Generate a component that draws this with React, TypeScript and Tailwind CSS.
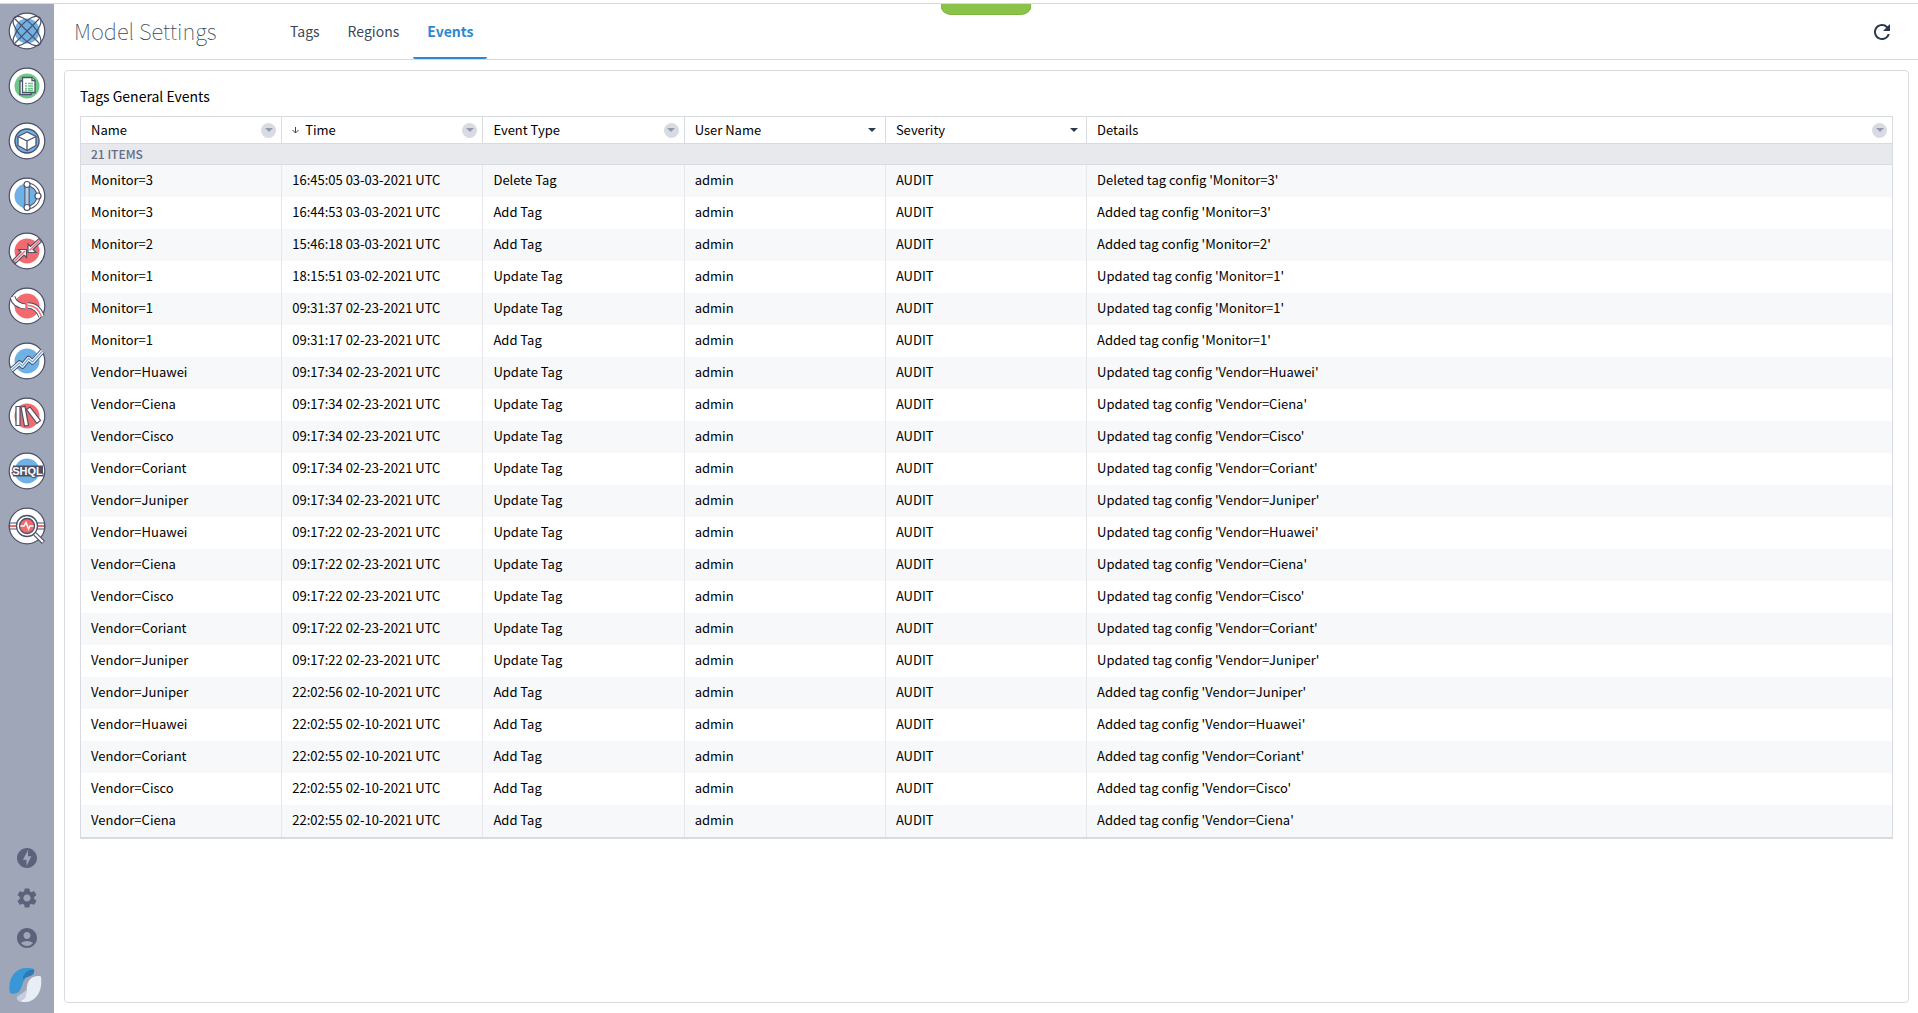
import React, { useState } from 'react'
import { MdAccountCircle, MdOfflineBolt, MdRefresh, MdSettings } from 'react-icons/md'

interface EventRow {
  name: string
  time: string
  type: string
  details: string
}

const row = (name: string, time: string, action: string): EventRow => ({
  name,
  time: `${time} UTC`,
  type: `${action} Tag`,
  details: `${action === 'Add' ? 'Added' : action + 'd'} tag config '${name}'`,
})

const events: EventRow[] = [
  row('Monitor=3', '16:45:05 03-03-2021', 'Delete'),
  row('Monitor=3', '16:44:53 03-03-2021', 'Add'),
  row('Monitor=2', '15:46:18 03-03-2021', 'Add'),
  row('Monitor=1', '18:15:51 03-02-2021', 'Update'),
  row('Monitor=1', '09:31:37 02-23-2021', 'Update'),
  row('Monitor=1', '09:31:17 02-23-2021', 'Add'),
  row('Vendor=Huawei', '09:17:34 02-23-2021', 'Update'),
  row('Vendor=Ciena', '09:17:34 02-23-2021', 'Update'),
  row('Vendor=Cisco', '09:17:34 02-23-2021', 'Update'),
  row('Vendor=Coriant', '09:17:34 02-23-2021', 'Update'),
  row('Vendor=Juniper', '09:17:34 02-23-2021', 'Update'),
  row('Vendor=Huawei', '09:17:22 02-23-2021', 'Update'),
  row('Vendor=Ciena', '09:17:22 02-23-2021', 'Update'),
  row('Vendor=Cisco', '09:17:22 02-23-2021', 'Update'),
  row('Vendor=Coriant', '09:17:22 02-23-2021', 'Update'),
  row('Vendor=Juniper', '09:17:22 02-23-2021', 'Update'),
  row('Vendor=Juniper', '22:02:56 02-10-2021', 'Add'),
  row('Vendor=Huawei', '22:02:55 02-10-2021', 'Add'),
  row('Vendor=Coriant', '22:02:55 02-10-2021', 'Add'),
  row('Vendor=Cisco', '22:02:55 02-10-2021', 'Add'),
  row('Vendor=Ciena', '22:02:55 02-10-2021', 'Add'),
]

const columns = [
  { label: 'Name', round: true },
  { label: 'Time', round: true, sorted: true },
  { label: 'Event Type', round: true },
  { label: 'User Name', round: false },
  { label: 'Severity', round: false },
  { label: 'Details', round: true },
]

const INK = '#4d5168'
const BLUE = '#6fb1e4'
const GREEN = '#6cc788'
const RED = '#f16a6d'

const apps = [
  {
    label: 'Explorer',
    color: BLUE,
    art: (
      <g fill="none" stroke={INK} strokeWidth="1.2">
        <ellipse cx="18" cy="18" rx="18.5" ry="8" transform="rotate(47 18 18)" />
        <ellipse cx="18" cy="18" rx="18.5" ry="8" transform="rotate(-47 18 18)" />
        <path d="M6 6 30 30M30 6 6 30" />
      </g>
    ),
  },
  {
    label: 'Inventory',
    color: GREEN,
    art: (
      <g fill="#fff" stroke={INK} strokeWidth="1.3">
        <path d="M11 13h11v13.500H11z" />
        <path d="M13.500 9.500h9.500l3 3V24.500H13.500z" />
        <path d="M23 9.500v3h3" />
        <path stroke={GREEN} d="M16 15.500h2M19 15.500h5M16 18h2M19 18h5M16 20.500h2M19 20.500h5M16 22.500h2M19 22.500h5" />
      </g>
    ),
  },
  {
    label: 'Model',
    color: BLUE,
    art: (
      <g fill="#fff" stroke={INK} strokeWidth="1.3" strokeLinejoin="round">
        <circle cx="18" cy="18" r="12" fill={BLUE} />
        <path d="M18 9l9 4.500v9L18 27.500l-9-5v-9z" />
        <path fill="none" d="M9 13.500l9 4.500 9-4.500M18 18v9.500" />
      </g>
    ),
  },
  {
    label: 'Topology',
    color: BLUE,
    art: (
      <g fill="#fff" stroke={INK} strokeWidth="1.2">
        <path fill="none" stroke={INK} strokeWidth="4" d="M18 6.500a11.500 11.500 0 0 1 0 23" />
        <path fill="none" stroke="#fff" strokeWidth="2" d="M18 6.500a11.500 11.500 0 0 1 0 23" />
        <path d="M16 8h4v20h-4z" />
        <path stroke={BLUE} d="M18 9v18" />
        <circle cx="18" cy="6.500" r="3" />
        <circle cx="18" cy="29.500" r="3" />
        <circle cx="29" cy="18" r="3" />
      </g>
    ),
  },
  {
    label: 'Conflicts',
    color: RED,
    art: (
      <g fill="#fff" stroke={INK} strokeWidth="1.2">
        <path d="M3.500 27.500l8.500-8.500-2.500-2.500h8v8l-2.500-2.500-8.500 8.500z" />
        <path d="M32.500 8.500L24 16.500l3 3h-8v-8.500l2.500 2.500 8.500-8z" />
        <path fill="none" stroke={RED} strokeWidth="1.500" d="M5 29l11-11M31 7l-10.500 10.500" />
      </g>
    ),
  },
  {
    label: 'Failures',
    color: RED,
    art: (
      <g fill="none">
        <path stroke={INK} strokeWidth="6" d="M3.500 9c1.500 6 6 9 13 9.500" />
        <path stroke="#fff" strokeWidth="4" d="M3.500 9c1.500 6 6 9 13.500 9.500" />
        <path stroke={INK} strokeWidth="6.500" d="M19 17.500c7 0 11 4 13.500 11" />
        <path stroke="#fff" strokeWidth="4.500" d="M18.500 17.500c7.500 0 11.500 4 14 11" />
        <path stroke={RED} strokeWidth="1.300" d="M19 17.500c7 0 11 4 13.500 11" />
        <path fill={RED} d="M16 14.500l3 2-1.500 1.500 2 1.500-3 2z" />
      </g>
    ),
  },
  {
    label: 'Traffic',
    color: BLUE,
    art: (
      <g fill="none" strokeLinejoin="round">
        <path stroke={INK} strokeWidth="5.500" d="M2.500 27l8-7 3 3 6-7.500 4 3.500 10-11" />
        <path stroke="#fff" strokeWidth="3.500" d="M2.500 27l8-7 3 3 6-7.500 4 3.500 10-11" />
        <path stroke={BLUE} strokeWidth="1.400" d="M2.500 27l8-7 3 3 6-7.500 4 3.500 10-11" />
      </g>
    ),
  },
  {
    label: 'Library',
    color: RED,
    art: (
      <g fill="#fff" stroke={INK} strokeWidth="1.200">
        <path d="M7 8.500h4v19H7z" />
        <path d="M12 9l4-.7 3.500 19-4 .7z" />
        <path d="M17.500 11.500l3.500-2.500 10.500 13.500-3.500 3z" />
      </g>
    ),
  },
  {
    label: 'Query',
    color: BLUE,
    art: (
      <g>
        <path fill={INK} d="M4 12.500h30v11H4z" />
        <text
          x="18.500"
          y="22"
          textAnchor="middle"
          fontFamily="Liberation Sans, sans-serif"
          fontSize="11"
          fontWeight="700"
          fill="#fff"
          stroke={INK}
          strokeWidth="2"
          paintOrder="stroke"
        >
          SHQL
        </text>
      </g>
    ),
  },
  {
    label: 'Diagnostics',
    color: '#fff',
    art: (
      <g fill="none" stroke={INK}>
        <path fill="#fff" strokeWidth="1.200" d="M.5 15h35v6H.5z" />
        <path stroke={RED} strokeWidth="2" d="M1 18h34" />
        <circle cx="18" cy="18" r="10.500" fill="#fff" strokeWidth="1.300" />
        <circle cx="18" cy="18" r="7.500" fill={RED} strokeWidth="1.300" />
        <path stroke="#fff" strokeWidth="1.500" d="M11.500 18h3.500l2-3.500 2.500 6.500 1.500-3h3.500" />
        <path strokeWidth="4.500" d="M26 26l8.500 8.500" />
        <path stroke="#fff" strokeWidth="2.200" d="M26 26l8 8" />
      </g>
    ),
  },
]

const AppIcon = ({ color, art }: { color: string; art: React.ReactNode }) => (
  <svg viewBox="0 0 36 36" className="size-9 overflow-visible">
    <circle cx="18" cy="18" r="17.800" fill="#fff" stroke={INK} strokeWidth="1.200" />
    <circle cx="18" cy="18" r="12.500" fill={color} />
    {art}
  </svg>
)

const Logo = () => (
  <svg viewBox="0 0 34 34" className="size-[34px]">
    <path fill="#3a97d6" d="M1 25C-2 11 6 0 17 0c5 0 8 .5 8 2 0 5-6 5-9 9-4 5-3 14-10 14.500-2 .3-4 .3-5-.5z" />
    <path fill="#2a7ab5" d="M14 9c2-5 6-8 11-7.500 1 4-2 6-5 7-3 .5-4 1-6 3z" />
    <path fill="#c5cde0" d="M8 31c-1-4 5-4 9-9l4 11c-5 2-11 2-13-2z" />
    <path fill="#e9edf5" d="M32 9c2 14-5 25-16 25-2 0-4-.5-4-1 7-3 5-8 6-15 1-6 5-10 11-10 2 0 3 0 3 1z" />
  </svg>
)

const Caret = ({ className }: { className: string }) => (
  <svg viewBox="0 0 8 4" className={className}>
    <path fill="currentColor" d="M0 0h8L4 4z" />
  </svg>
)

const Sidebar = () => (
  <nav className="flex w-[54px] shrink-0 flex-col items-center justify-between bg-[#9fa6b8] pt-[9px] pr-px pb-[11px]">
    <div className="flex flex-col gap-[19px]">
      {apps.map((app) => (
        <button key={app.label} type="button" aria-label={app.label} className="cursor-pointer">
          <AppIcon color={app.color} art={app.art} />
        </button>
      ))}
    </div>
    <div className="flex flex-col items-center gap-[18px] text-[#5c627c]">
      <div className="flex flex-col gap-4">
        <button type="button" aria-label="Activity"><MdOfflineBolt size={24} /></button>
        <button type="button" aria-label="Settings"><MdSettings size={24} /></button>
        <button type="button" aria-label="Account"><MdAccountCircle size={24} /></button>
      </div>
      <a href="#" aria-label="Home" className="pr-0.5"><Logo /></a>
    </div>
  </nav>
)

const EventsTable = () => (
  <table className="w-full table-fixed border-separate border-spacing-0 border border-b-2 border-[#d9dbe3] text-left text-[13px] leading-4">
    <colgroup>
      <col className="w-1/9" />
      <col className="w-1/9" />
      <col className="w-1/9" />
      <col className="w-1/9" />
      <col className="w-1/9" />
      <col />
    </colgroup>
    <thead>
      <tr>
        {columns.map((col) => (
          <th key={col.label} className="h-[27px] border-r border-b border-[#d9dbe3] pr-[5px] pl-2.5 font-normal last:border-r-0">
            <div className="flex items-center justify-between">
              <span className="flex items-center gap-1.5">
                {col.sorted && (
                  <svg viewBox="0 0 7 8" className="h-2 w-[7px]" fill="none" stroke="#39475a">
                    <path d="M3.500 1v6M.5 4l3 3 3-3" />
                  </svg>
                )}
                {col.label}
              </span>
              <button
                type="button"
                aria-label={`Filter ${col.label}`}
                className={
                  col.round
                    ? 'flex size-[15px] items-center justify-center rounded-full bg-[#d9dbe3] text-[#9299b0]'
                    : 'flex size-[15px] items-center justify-center text-[#2c3a4d]'
                }
              >
                <Caret className="h-1 w-2" />
              </button>
            </div>
          </th>
        ))}
      </tr>
      <tr>
        <th colSpan={6} className="h-[21px] border-b border-[#d9dbe3] bg-[#e8e9ed] pl-2.5 text-xs leading-4 font-medium text-[#666d85]">
          {events.length} ITEMS
        </th>
      </tr>
    </thead>
    <tbody>
      {events.map((e, i) => (
        <tr key={i} className="odd:bg-[#f6f8fa] [&>td]:h-8 [&>td]:border-r [&>td]:border-[#e6e7ec] [&>td]:pb-0.5 [&>td]:pl-2.5 [&>td:last-child]:border-r-0">
          <td>{e.name}</td>
          <td>{e.time}</td>
          <td>{e.type}</td>
          <td>admin</td>
          <td>AUDIT</td>
          <td>{e.details}</td>
        </tr>
      ))}
    </tbody>
  </table>
)

export default function App() {
  const [tab, setTab] = useState('Events')

  return (
    <div className="flex min-h-screen flex-col bg-white pt-[3px] font-['Noto_Sans_CJK_SC','Source_Sans_Pro',sans-serif] text-black">
      <div className="flex grow border-t border-[#d9dbe3]">
        <Sidebar />
        <main className="relative flex min-w-0 grow flex-col">
          <div className="absolute top-0 left-1/2 h-[11px] w-[91px] -translate-x-1/2 rounded-b-[10px] border border-t-0 border-[#7cb342] bg-[#8bc34a]" />
          <header className="flex h-14 items-stretch border-b border-[#d9dbe3] pr-6 pl-5">
            <h1 className="flex w-[202px] items-center pb-1 text-[22px] leading-7 font-thin text-[#39475a]">Model Settings</h1>
            <div className="flex grow">
              {['Tags', 'Regions', 'Events'].map((t) => (
                <button
                  key={t}
                  type="button"
                  onClick={() => setTab(t)}
                  className={
                    t === tab
                      ? 'rounded-xs border-b-2 border-[#2b87d1] px-3.5 text-sm font-bold text-[#2b87d1]'
                      : 'px-3.5 pb-0.5 text-sm text-[#39475a]'
                  }
                >
                  {t}
                </button>
              ))}
            </div>
            <button type="button" aria-label="Refresh" className="text-[#2c3a4d]">
              <MdRefresh size={24} />
            </button>
          </header>
          <section className="my-2.5 mr-[9px] ml-2.5 flex grow flex-col rounded border border-[#d9dbe3] px-[15px] pt-[13px]">
            <h2 className="mb-2 text-sm leading-6">Tags General Events</h2>
            <EventsTable />
          </section>
        </main>
      </div>
    </div>
  )
}
